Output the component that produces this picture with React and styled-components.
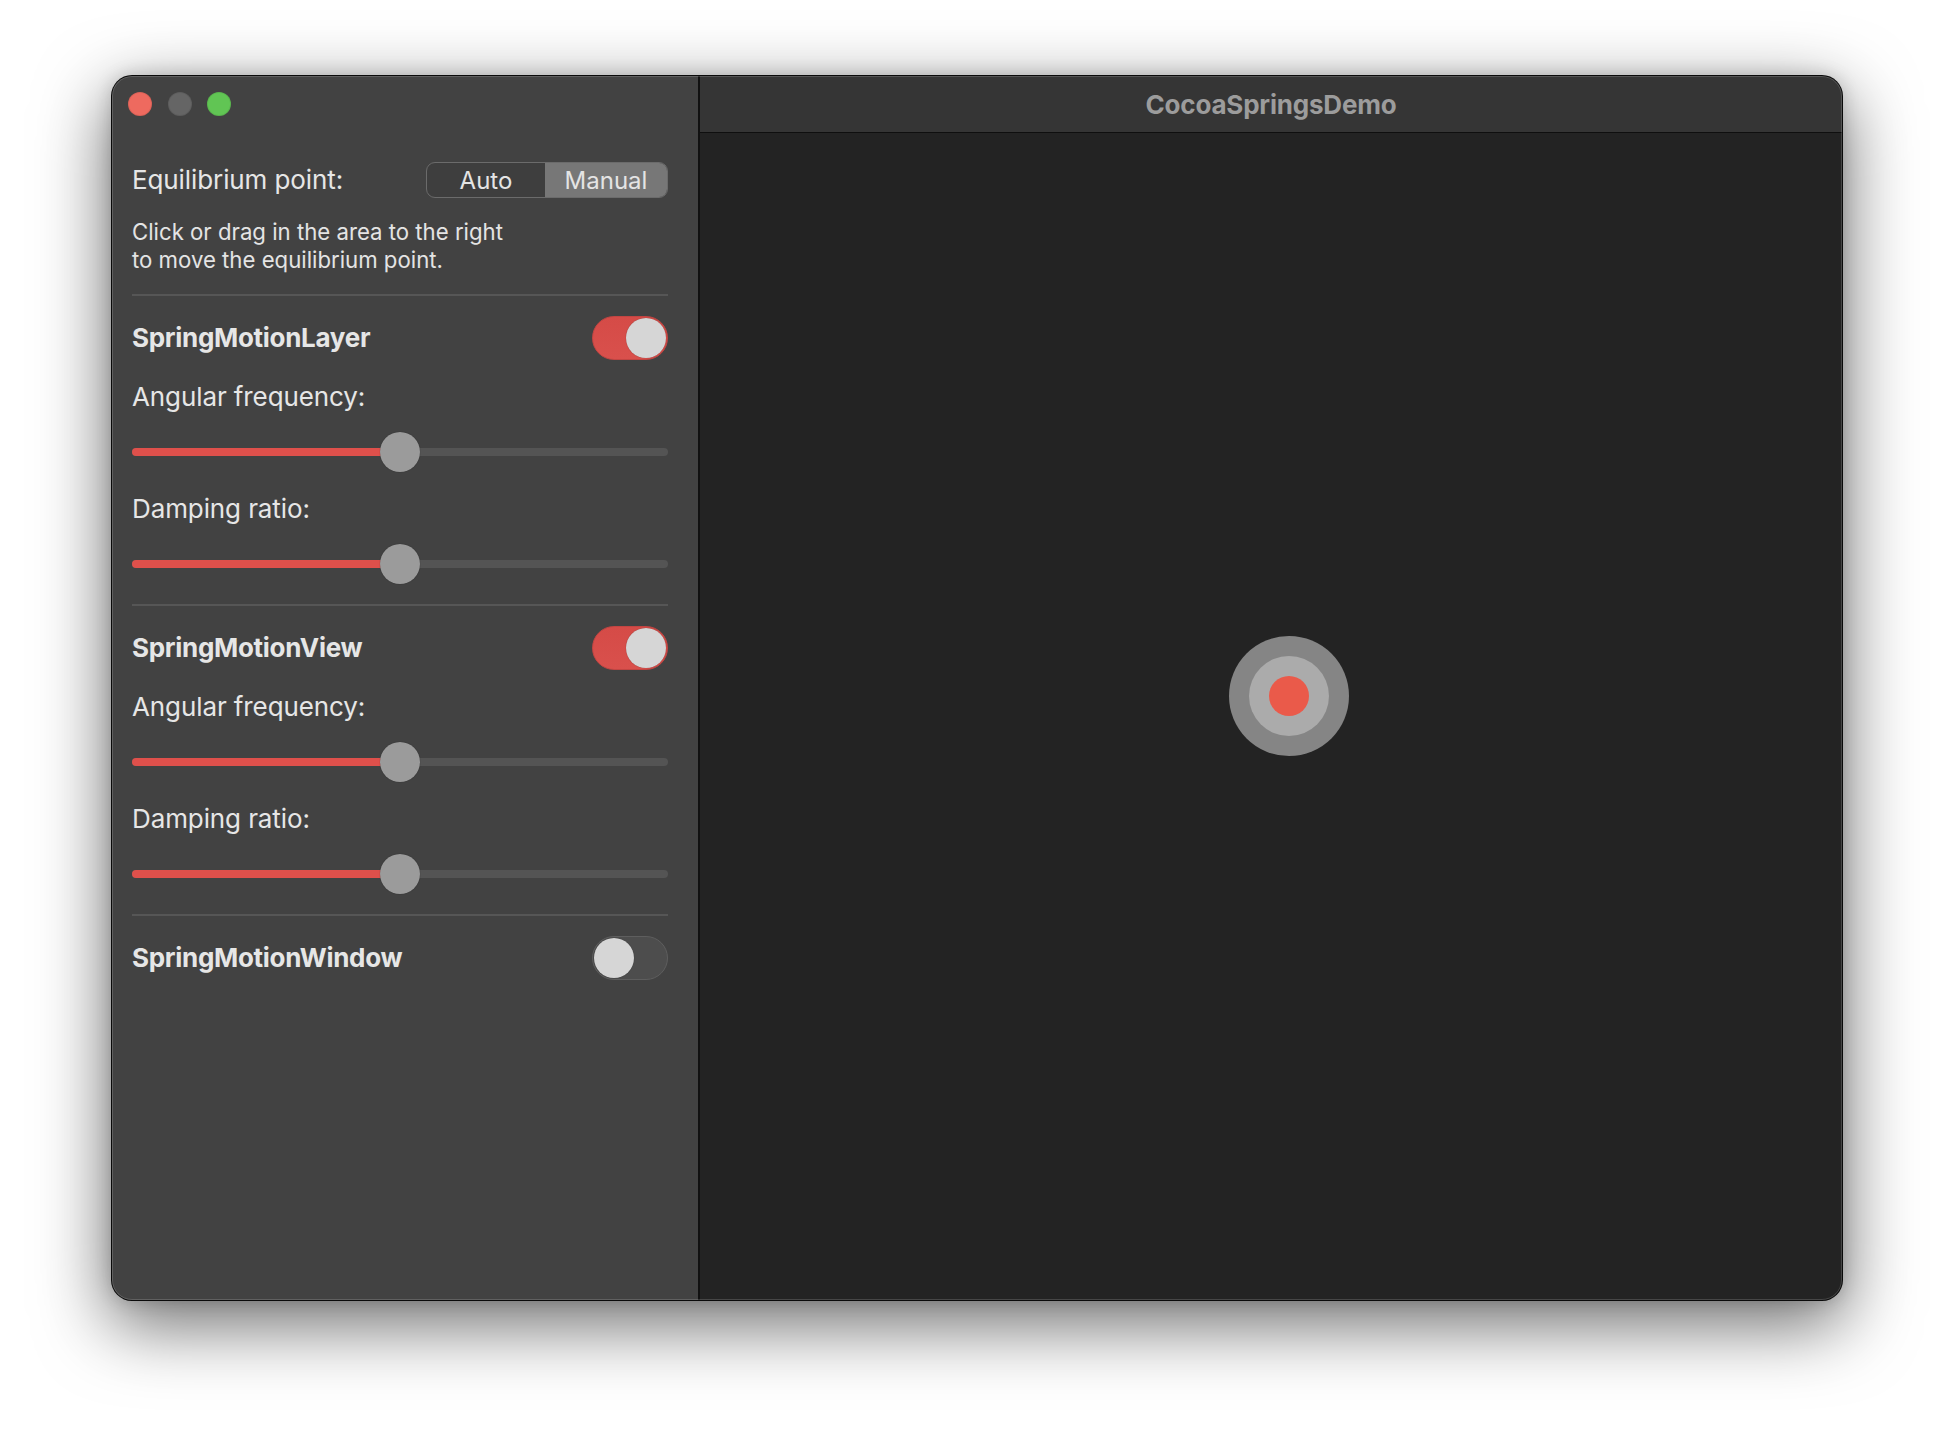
import React from "react";
import styled, { createGlobalStyle } from "styled-components";

const Global = createGlobalStyle`
  html, body { margin: 0; padding: 0; background: #ffffff; }
  body { font-family: Inter, "Noto Sans", "Liberation Sans", sans-serif; -webkit-font-smoothing: antialiased; }
`;

const Page = styled.div`
  width: 1954px;
  height: 1448px;
  box-sizing: border-box;
  padding: 76px 0 0 112px;
  background: #ffffff;
  overflow: hidden;
`;

const Window = styled.div`
  position: relative;
  width: 1730px;
  height: 1224px;
  border-radius: 20px;
  overflow: hidden;
  display: flex;
  background: #232323;
  box-shadow: 0 0 0 1px #0a0a0a, 0 22px 70px 4px rgba(0, 0, 0, 0.56), 0 0 18px rgba(0, 0, 0, 0.18);
  &::after {
    content: "";
    position: absolute;
    inset: 0;
    border-radius: 20px;
    border: 1px solid rgba(255, 255, 255, 0.16);
    pointer-events: none;
  }
`;

const Sidebar = styled.div`
  width: 586px;
  flex: none;
  background: #424242;
  border-right: 2px solid #111111;
  display: flex;
  flex-direction: column;
`;

const TrafficLights = styled.div`
  display: flex;
  gap: 15.5px;
  padding: 16px 0 0 16px;
`;

const Light = styled.span`
  width: 24px;
  height: 24px;
  border-radius: 50%;
  background: ${(p) => p.$color};
  box-shadow: inset 0 0 0 1px rgba(0, 0, 0, 0.08);
`;

const Controls = styled.div`
  display: flex;
  flex-direction: column;
  padding: 0 30px 0 20px;
`;

const EqRow = styled.div`
  margin-top: 46px;
  display: flex;
  align-items: center;
  justify-content: space-between;
  height: 36px;
`;

const Label = styled.div`
  font-size: 26px;
  line-height: 32px;
  color: #e6e6e6;
  font-weight: ${(p) => (p.$bold ? 700 : 400)};
  margin-top: ${(p) => p.$mt || 0}px;
  letter-spacing: ${(p) => (p.$bold ? "-0.3px" : "-0.1px")};
`;

const Segmented = styled.div`
  display: grid;
  grid-template-columns: 118px 122px;
  height: 36px;
  box-sizing: border-box;
  border: 1.5px solid #6b6b6b;
  border-radius: 9px;
  overflow: hidden;
  background: #3e3e3e;
`;

const Segment = styled.div`
  display: flex;
  align-items: center;
  justify-content: center;
  font-size: 24px;
  color: #e4e4e4;
  background: ${(p) => (p.$selected ? "#777777" : "transparent")};
`;

const Description = styled.p`
  margin: 20px 0 0 0;
  font-size: 22.2px;
  line-height: 28px;
  color: #e4e4e4;
`;

const Separator = styled.div`
  height: 2px;
  background: #565656;
  margin-top: ${(p) => p.$mt}px;
`;

const HeaderRow = styled.div`
  margin-top: 20px;
  height: 44px;
  display: flex;
  align-items: center;
  justify-content: space-between;
`;

const SwitchTrack = styled.div`
  width: 76px;
  height: 44px;
  box-sizing: border-box;
  border-radius: 22px;
  background: ${(p) => (p.$on ? "linear-gradient(#d54b47, #d9504c)" : "#4d4d4d")};
  border: 1px solid ${(p) => (p.$on ? "#c24542" : "#5e5e5e")};
  display: flex;
  align-items: center;
  justify-content: ${(p) => (p.$on ? "flex-end" : "flex-start")};
  padding: 0 1px;
`;

const SwitchKnob = styled.div`
  width: 40px;
  height: 40px;
  border-radius: 50%;
  background: #d6d6d6;
  box-shadow: 0 0 1px rgba(0, 0, 0, 0.4);
`;

const SliderWrap = styled.div`
  position: relative;
  margin-top: 19px;
  height: 40px;
  display: flex;
  align-items: center;
`;

const Track = styled.div`
  width: 100%;
  height: 8px;
  border-radius: 4px;
  background: #545454;
  overflow: hidden;
  display: flex;
`;

const Fill = styled.div`
  height: 100%;
  background: #df504b;
`;

const Knob = styled.div`
  position: absolute;
  top: 0;
  width: 40px;
  height: 40px;
  border-radius: 50%;
  background: #9b9b9b;
  box-shadow: 0 0 1px rgba(0, 0, 0, 0.5);
`;

const Main = styled.div`
  flex: 1;
  display: flex;
  flex-direction: column;
`;

const TitleBar = styled.div`
  height: 56px;
  flex: none;
  background: #353535;
  border-bottom: 1px solid #0f0f0f;
  display: flex;
  align-items: center;
  justify-content: center;
  font-size: 26px;
  font-weight: 700;
  color: #9c9c9c;
  letter-spacing: -0.2px;
`;

const Canvas = styled.div`
  position: relative;
  flex: 1;
  background: #232323;
`;

const Target = styled.div`
  position: absolute;
  left: 529px;
  top: 503px;
  width: 120px;
  height: 120px;
  border-radius: 50%;
  background: #858585;
  display: flex;
  align-items: center;
  justify-content: center;
`;

const TargetMid = styled.div`
  width: 80px;
  height: 80px;
  border-radius: 50%;
  background: #ababab;
  display: flex;
  align-items: center;
  justify-content: center;
`;

const TargetDot = styled.div`
  width: 40px;
  height: 40px;
  border-radius: 50%;
  background: #ea5a4a;
`;

function Switch({ on }) {
  return (
    <SwitchTrack $on={on}>
      <SwitchKnob />
    </SwitchTrack>
  );
}

function Slider({ value }) {
  const width = 536;
  const knob = 40;
  const center = knob / 2 + value * (width - knob);
  return (
    <SliderWrap>
      <Track>
        <Fill style={{ width: `${center}px` }} />
      </Track>
      <Knob style={{ left: `${center - knob / 2}px` }} />
    </SliderWrap>
  );
}

function Section({ title, on, withSliders }) {
  return (
    <>
      <HeaderRow>
        <Label $bold>{title}</Label>
        <Switch on={on} />
      </HeaderRow>
      {withSliders && (
        <>
          <Label $mt={21}>Angular frequency:</Label>
          <Slider value={0.5} />
          <Label $mt={21}>Damping ratio:</Label>
          <Slider value={0.5} />
        </>
      )}
    </>
  );
}

export default function App() {
  return (
    <>
      <Global />
      <Page>
        <Window>
          <Sidebar>
            <TrafficLights>
              <Light $color="#ee6a5f" />
              <Light $color="#656565" />
              <Light $color="#61c554" />
            </TrafficLights>
            <Controls>
              <EqRow>
                <Label>Equilibrium point:</Label>
                <Segmented>
                  <Segment>Auto</Segment>
                  <Segment $selected>Manual</Segment>
                </Segmented>
              </EqRow>
              <Description>
                Click or drag in the area to the right
                <br />
                to move the equilibrium point.
              </Description>
              <Separator $mt={20} />
              <Section title="SpringMotionLayer" on withSliders />
              <Separator $mt={20} />
              <Section title="SpringMotionView" on withSliders />
              <Separator $mt={20} />
              <Section title="SpringMotionWindow" on={false} />
            </Controls>
          </Sidebar>
          <Main>
            <TitleBar>CocoaSpringsDemo</TitleBar>
            <Canvas>
              <Target>
                <TargetMid>
                  <TargetDot />
                </TargetMid>
              </Target>
            </Canvas>
          </Main>
        </Window>
      </Page>
    </>
  );
}
